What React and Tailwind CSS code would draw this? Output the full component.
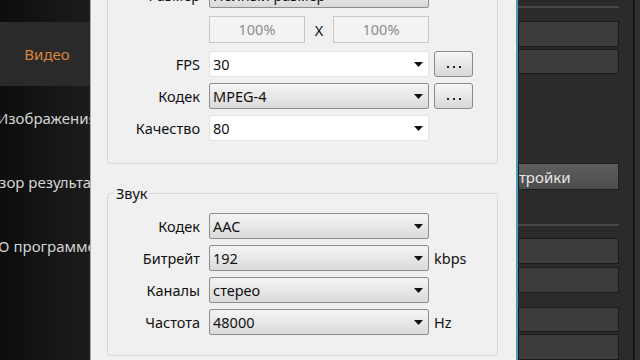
import React from 'react';

const uiFont = { fontFamily: '"Noto Sans", "Open Sans", sans-serif' };

function Arrow() {
    return (
        <svg width="9" height="5" viewBox="0 0 9 5" className="shrink-0">
            <path d="M0 0 H9 L4.5 5 Z" fill="#111" />
        </svg>
    );
}

function Combo({ value, editable }) {
    return (
        <div
            className={
                editable
                    ? 'w-[220px] h-[26px] shrink-0 flex items-center pl-[3px] pr-[5px] rounded-[2px] border border-[#e4e4e4] bg-white'
                    : 'w-[220px] h-[26px] shrink-0 flex items-center pl-[3px] pr-[5px] rounded-[2px] border border-[#8e8e8e] bg-gradient-to-b from-[#f5f5f5] to-[#dadada]'
            }
        >
            <span className="flex-1 truncate text-[#111]">{value}</span>
            <Arrow />
        </div>
    );
}

function DotsButton() {
    return (
        <div className="w-[39px] h-[26px] shrink-0 flex items-center justify-center gap-[4px] pt-[6px] rounded-[3px] border border-[#8a8a8a] bg-gradient-to-b from-[#f6f6f6] to-[#d8d8d8]">
            <span className="w-[2px] h-[2px] bg-[#222]" />
            <span className="w-[2px] h-[2px] bg-[#222]" />
            <span className="w-[2px] h-[2px] bg-[#222]" />
        </div>
    );
}

function Row({ label, className, children }) {
    return (
        <div className={'flex items-center gap-[9px] h-[26px] ' + (className || '')}>
            <span className="w-[92px] shrink-0 text-right text-[#111]">{label}</span>
            <div className="flex items-center gap-[5px]">{children}</div>
        </div>
    );
}

function Sidebar() {
    const items = ['Изображения', 'Обзор результатов', 'О программе'];
    return (
        <div
            className="w-[90px] shrink-0 h-full overflow-hidden pl-[4px] pt-[22px] bg-gradient-to-r from-[#0d0d0d] to-[#1c1c1c] text-[15px]"
            style={uiFont}
        >
            {/* selected tile spans the full width */}
            <div className="h-[64px] -ml-[4px] pl-[4px] flex items-center justify-center bg-[#2a2a2a] text-[#d98640]">
                Видео
            </div>
            {items.map((item) => (
                <div key={item} className="h-[64px] flex items-center justify-center whitespace-nowrap text-[#d4d4d4]">
                    {item}
                </div>
            ))}
        </div>
    );
}

function Bar({ className }) {
    return <div className={'h-[27px] bg-[#3b3b3b] border border-[#1b1b1b] ' + (className || '')} />;
}

function RightPanel() {
    return (
        <div className="flex-1 h-full flex bg-[#2b2b2b]">
            <div className="w-[101px] shrink-0 flex flex-col pt-[6px]">
                <div className="h-[2px] bg-[#474747]" />
                <Bar className="mt-[13px]" />
                <Bar className="mt-[2px]" />
                <div
                    className="mt-[89px] h-[28px] flex items-center overflow-hidden border border-[#1e1e1e] bg-gradient-to-b from-[#5e5e5e] to-[#4c4c4c] text-[15px] text-[#e6e6e6] whitespace-nowrap"
                    style={uiFont}
                >
                    <span className="-ml-[27px]">Настройки</span>
                </div>
                <div className="mt-[34px] h-[2px] bg-[#474747]" />
                <Bar className="mt-[12px]" />
                <Bar className="mt-[3px]" />
                <Bar className="mt-[14px]" />
                <Bar className="mt-[2px]" />
            </div>
            <div className="w-[14px] shrink-0" />
            <div className="w-[2px] shrink-0 bg-[#181818]" />
            <div className="flex-1 bg-[#303030]" />
        </div>
    );
}

function Dialog() {
    return (
        <div
            className="w-[428px] shrink-0 h-full flex flex-col bg-[#f0f0f0] border-l border-[#a8a8a8] border-r-2 border-r-[#4b9fb2] text-[14.5px] leading-[20px]"
            style={uiFont}
        >
            {/* Видео group, top cut off by the screenshot */}
            <div className="-mt-[40px] ml-[16px] mr-[18px] pt-[21px] pb-[22px] border border-[#d8d8d8] rounded-[3px]">
                <Row label="Размер">
                    <Combo value="Полный размер" />
                </Row>
                <Row className="mt-[8px]" label="">
                    <div className="w-[220px] flex items-center">
                        <div className="w-[96px] h-[27px] flex items-center justify-center border border-[#c8c8c8] bg-[#f3f3f3] text-[#8c8c8c]">
                            100%
                        </div>
                        <span className="flex-1 text-center text-[#111] pt-[2px]">X</span>
                        <div className="w-[96px] h-[27px] flex items-center justify-center border border-[#c8c8c8] bg-[#f3f3f3] text-[#8c8c8c]">
                            100%
                        </div>
                    </div>
                </Row>
                <Row className="mt-[9px]" label="FPS">
                    <Combo value="30" editable />
                    <DotsButton />
                </Row>
                <Row className="mt-[6px]" label="Кодек">
                    <Combo value="MPEG-4" />
                    <DotsButton />
                </Row>
                <Row className="mt-[6px]" label="Качество">
                    <Combo value="80" editable />
                </Row>
            </div>

            {/* Звук group */}
            <fieldset className="mt-[19px] ml-[16px] mr-[18px] pb-[20px] border border-[#d8d8d8] rounded-[3px]">
                <legend className="ml-[6px] px-[2px] text-[#111]">Звук</legend>
                <Row className="mt-[10px]" label="Кодек">
                    <Combo value="AAC" />
                </Row>
                <Row className="mt-[6px]" label="Битрейт">
                    <Combo value="192" />
                    <span className="text-[#111]">kbps</span>
                </Row>
                <Row className="mt-[6px]" label="Каналы">
                    <Combo value="стерео" />
                </Row>
                <Row className="mt-[6px]" label="Частота">
                    <Combo value="48000" />
                    <span className="text-[#111]">Hz</span>
                </Row>
            </fieldset>
        </div>
    );
}

export default function App() {
    return (
        <div className="w-[640px] h-[360px] overflow-hidden flex bg-[#2b2b2b]">
            <Sidebar />
            <Dialog />
            <RightPanel />
        </div>
    );
}
